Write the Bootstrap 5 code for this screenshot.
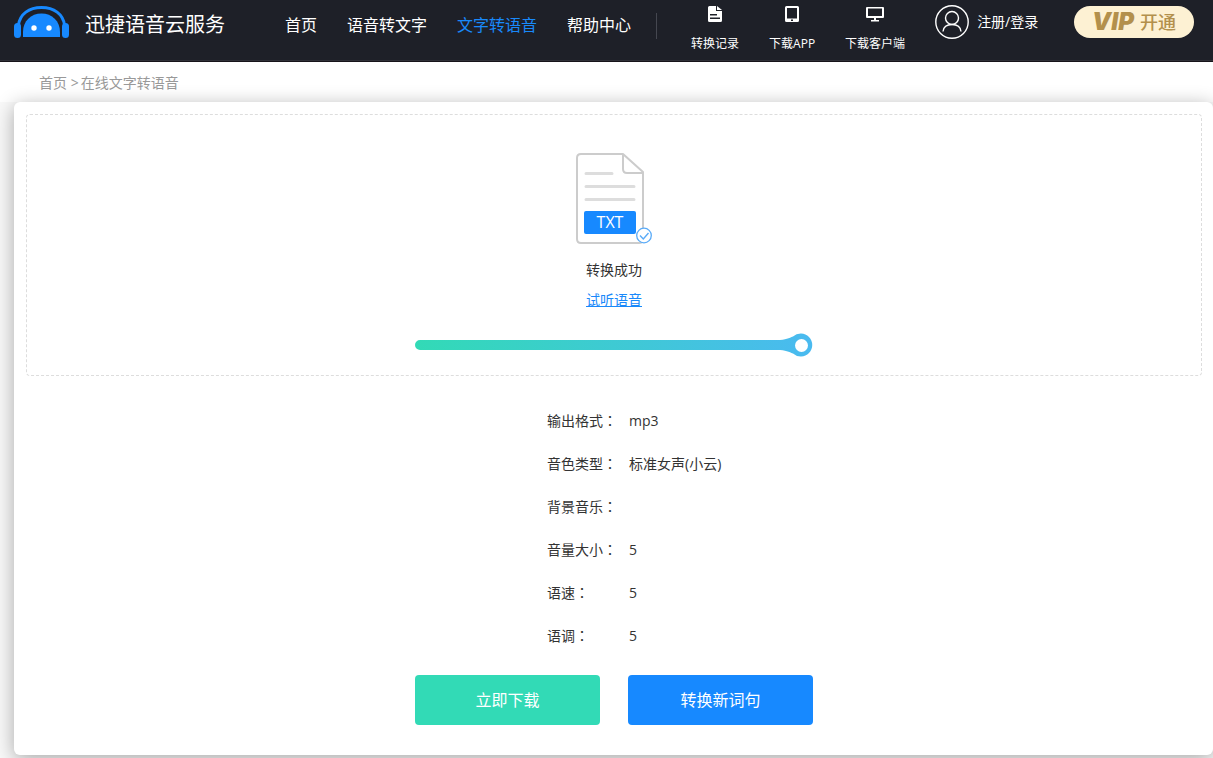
<!DOCTYPE html>
<html lang="zh-CN">
<head>
<meta charset="utf-8">
<meta name="viewport" content="width=device-width, initial-scale=1">
<title>在线文字转语音</title>
<link href="https://cdn.jsdelivr.net/npm/bootstrap@5.3.0/dist/css/bootstrap.min.css" rel="stylesheet">
<style>
  body { background: #f9f9f9; color: #333; font: 14px/20px "Open Sans", "Noto Sans CJK SC", sans-serif; }
  a { color: inherit; text-decoration: none; }

  .site-header { background: #1e2028; height: 62px; padding: 0 19px 0 14px; color: #fff; border-bottom: 1px solid #17141a; box-shadow: inset 0 -1px #303138; white-space: nowrap; }
  .brand { gap: 16px; padding-top: 6px; font-size: 20px; line-height: 38px; }
  .main-menu { height: 50px; gap: 30px; margin-left: 60px; font-size: 16px; }
  .main-menu .active { color: #1989fa; }
  .divider { width: 1px; height: 26px; margin: 13px 34px 0 25px; background: #454750; }
  .quick { gap: 30px; padding-top: 6px; font-size: 12px; }
  .quick a { gap: 12px; }
  .account { height: 44px; gap: 8px; margin-left: 30px; }
  .vip { width: 120px; height: 32px; margin-top: 6px; border: 0; background: #fdf1d3; color: #b3904c; font-size: 18px; font-weight: 500; gap: 6px; }
  .vip b { font: italic 900 24px/32px Inter, sans-serif; }

  .crumbs { background: #fff; height: 40px; padding: 11px 39px; color: #999; }
  .crumbs a + a { margin-left: 2px; }

  .panel { background: #fff; margin-left: 14px; padding: 12px 11px 30px 12px; border-radius: 6px; box-shadow: 0 4px 20px rgba(0,0,0,.33); }
  .result { border: 1px dashed #ddd; border-radius: 4px; padding: 38px 0 18px; line-height: 30px; }
  .result .doc { margin-bottom: 11px; }
  .result a { color: #1989fa; text-decoration: underline; }
  .result .bar { margin-top: 18px; }
  .column { width: 398px; max-width: 100%; }
  .settings { display: grid; grid-template-columns: 82px 1fr; grid-auto-rows: 43px; align-items: center; margin: 23px 0 18px; padding-left: 132px; }
  .settings dt { font-weight: 400; }
  .settings dt span { font-family: "Noto Sans CJK TC", sans-serif; line-height: 1; }
  .settings dd { margin: 0; }
  .actions { gap: 28px; }
  .actions .btn { height: 50px; border: 0; border-radius: 4px; color: #fff; font-size: 16px; }
  .btn-get { background: #32dab6; }
  .btn-new { background: #1789ff; }
</style>
</head>
<body class="min-vh-100">
<header class="site-header d-flex align-items-start">
  <a class="brand d-flex" href="#">
    <svg width="55" height="33" viewBox="0 0 55 33" fill="#1789ff" aria-hidden="true">
      <path d="M4.500 19C6 8 15 1.500 27.500 1.500S49 8 50.500 19" fill="none" stroke="#1789ff" stroke-width="3"/>
      <rect y="17" width="7" height="15" rx="3.500"/><rect x="48" y="17" width="7" height="15" rx="3.500"/>
      <path d="M9 31V26C9 15 17 7.500 27.500 7.500S46 15 46 26V31Z"/>
      <circle cx="20" cy="22" r="2.700" fill="#fff"/><circle cx="35" cy="22" r="2.700" fill="#fff"/>
    </svg>
    <span>迅捷语音云服务</span>
  </a>
  <nav class="main-menu d-flex align-items-center">
    <a href="#">首页</a><a href="#">语音转文字</a><a href="#" class="active">文字转语音</a><a href="#">帮助中心</a>
  </nav>
  <div class="divider"></div>
  <div class="quick d-flex">
    <a href="#" class="d-flex flex-column align-items-center">
      <svg width="16" height="16" viewBox="0 0 16 16" fill="#fff" aria-hidden="true"><path fill-rule="evenodd" d="M2.500 0H9V5H15V14.500Q15 16 13.500 16H2.500Q1 16 1 14.500V1.500Q1 0 2.500 0ZM3 8V9.500H10V8ZM3 11.500V13H13V11.500Z"/><path d="M10 0L15 4H10Z"/></svg>
      <span>转换记录</span>
    </a>
    <a href="#" class="d-flex flex-column align-items-center">
      <svg width="16" height="16" viewBox="0 0 16 16" fill="#fff" aria-hidden="true"><path fill-rule="evenodd" d="M2.500 0H13.500Q15 0 15 1.500V14.500Q15 16 13.500 16H2.500Q1 16 1 14.500V1.500Q1 0 2.500 0ZM3 2V12.500H13V2ZM7 13.500V15H9V13.500Z"/></svg>
      <span>下载APP</span>
    </a>
    <a href="#" class="d-flex flex-column align-items-center">
      <svg width="18" height="16" viewBox="0 0 18 16" fill="#fff" aria-hidden="true"><path fill-rule="evenodd" d="M1 1H17Q18 1 18 2V11Q18 12 17 12H10V14H13V15.500H5V14H8V12H1Q0 12 0 11V2Q0 1 1 1ZM2 2.500V10H16V2.500Z"/></svg>
      <span>下载客户端</span>
    </a>
  </div>
  <a class="account d-flex align-items-center" href="#">
    <svg width="34" height="34" viewBox="0 0 34 34" fill="none" stroke="#fff" stroke-width="1.400" aria-hidden="true"><circle cx="17" cy="17" r="16.200"/><circle cx="17" cy="13" r="6.500"/><path d="M8 26.500C8.500 22 12 19.500 17 19.500S25.500 22 26 26.500"/></svg>
    <span>注册/登录</span>
  </a>
  <button type="button" class="vip btn rounded-pill p-0 ms-auto d-flex align-items-center justify-content-center"><b>VIP</b>开通</button>
</header>

<nav class="crumbs" aria-label="breadcrumb"><a href="#">首页</a> &gt;<a href="#">在线文字转语音</a></nav>

<main class="panel position-relative">
  <section class="result d-flex flex-column align-items-center">
    <svg class="doc" width="76" height="91" viewBox="0 0 76 91" aria-hidden="true">
      <path d="M47 1H5Q1 1 1 5V86Q1 90 5 90H63Q67 90 67 86V19ZM47 1V16Q47 20 51 20H67" fill="#fff" stroke="#ccc" stroke-width="2" stroke-linejoin="round"/>
      <path d="M10 20.500H36M10 33.500H58M10 46.500H58" stroke="#ddd" stroke-width="3" stroke-linecap="round"/>
      <rect x="8" y="58" width="52" height="23" rx="2" fill="#1789ff"/>
      <text x="34" y="75" text-anchor="middle" font-size="16" fill="#fff">TXT</text>
      <circle cx="68" cy="82.500" r="7.300" fill="#fff" stroke="#5aabf8" stroke-width="1.300"/>
      <path d="M64 82.500L67.300 86L72.500 80" fill="none" stroke="#5aabf8" stroke-width="1.400"/>
    </svg>
    <span>转换成功</span>
    <a href="#">试听语音</a>
    <svg class="bar column" width="398" height="24" viewBox="0 0 398 24" role="progressbar" aria-valuenow="100" aria-valuemin="0" aria-valuemax="100" aria-label="转换成功">
      <defs><linearGradient id="fade"><stop offset="0" stop-color="#32dab6"/><stop offset="1" stop-color="#4abaf0"/></linearGradient></defs>
      <path d="M5 7H362C371 7 374 5 378 3.500A11.500 11.500 0 1 1 378 20.500C374 19 371 17 362 17H5A5 5 0 0 1 5 7Z" fill="url(#fade)"/>
      <circle cx="386.500" cy="12.500" r="6.500" fill="#fff"/>
    </svg>
  </section>

  <div class="column mx-auto">
    <dl class="settings">
      <dt>输出格式<span lang="zh-TW">：</span></dt><dd>mp3</dd>
      <dt>音色类型<span lang="zh-TW">：</span></dt><dd>标准女声(小云)</dd>
      <dt>背景音乐<span lang="zh-TW">：</span></dt><dd></dd>
      <dt>音量大小<span lang="zh-TW">：</span></dt><dd>5</dd>
      <dt>语速<span lang="zh-TW">：</span></dt><dd>5</dd>
      <dt>语调<span lang="zh-TW">：</span></dt><dd>5</dd>
    </dl>
    <div class="actions d-flex">
      <button type="button" class="btn btn-get flex-fill w-50">立即下载</button>
      <button type="button" class="btn btn-new flex-fill w-50">转换新词句</button>
    </div>
  </div>
</main>
<script src="https://cdn.jsdelivr.net/npm/bootstrap@5.3.0/dist/js/bootstrap.bundle.min.js"></script>
</body>
</html>
